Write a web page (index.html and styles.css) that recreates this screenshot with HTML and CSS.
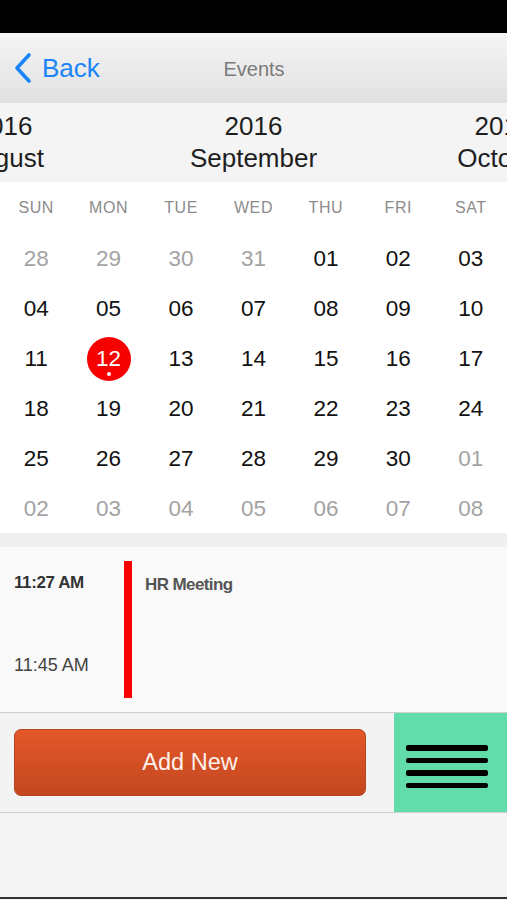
FILE: index.html
```html
<!DOCTYPE html>
<html lang="en">
<head>
  <meta charset="UTF-8" />
  <meta name="viewport" content="width=device-width, initial-scale=1" />
  <title>Events</title>
  <link rel="stylesheet" href="styles.css">
</head>
<body>
  <div class="status"></div>
  <header class="nav">
    <a class="back" href="#">
      <svg width="20" height="32" viewBox="0 0 20 32"><path d="M16 3 L4 16 L16 29" fill="none" stroke="#1a84f8" stroke-width="3.6" stroke-linecap="round" stroke-linejoin="round"/></svg>
      <span>Back</span>
    </a>
    <div class="title">Events</div>
    <div></div>
  </header>
  <div class="months">
    <div class="month">2016<br>August</div>
    <div class="month">2016<br>September</div>
    <div class="month">2016<br>October</div>
  </div>
  <div class="cal" id="cal">
    <div class="wd">SUN</div><div class="wd">MON</div><div class="wd">TUE</div><div class="wd">WED</div><div class="wd">THU</div><div class="wd">FRI</div><div class="wd">SAT</div>
  </div>
  <div class="gap"></div>
  <section class="events">
    <div class="times">
      <div class="start">11:27 AM</div>
      <div class="end">11:45 AM</div>
    </div>
    <div class="bar"></div>
    <div class="ev-title">HR Meeting</div>
  </section>
  <div class="actions">
    <div class="btn-wrap"><button class="add">Add New</button></div>
    <div class="menu">
      <span></span><span></span><span></span><span></span>
    </div>
  </div>
  <div class="filler"></div>
  <script>
    const cal = document.getElementById("cal");
    const days = [];
    [28, 29, 30, 31].forEach(d => days.push({ d, other: true }));
    for (let d = 1; d <= 30; d++) days.push({ d });
    for (let d = 1; d <= 8; d++) days.push({ d, other: true });
    days.forEach(({ d, other }) => {
      const cell = document.createElement("div");
      cell.className = "day" + (other ? " other" : "");
      const txt = String(d).padStart(2, "0");
      if (!other && d === 12) {
        cell.innerHTML = `<span class="today">${txt}<i></i></span>`;
      } else {
        cell.textContent = txt;
      }
      cal.appendChild(cell);
    });
  </script>
</body>
</html>
```

FILE: styles.css
```css
* { box-sizing: border-box; }
body { margin: 0; font-family: "Liberation Sans", Arial, sans-serif; background: #f4f4f4; }
.status { height: 33px; background: #000; }
.nav { height: 70px; display: grid; grid-template-columns: 1fr auto 1fr; align-items: center; background: linear-gradient(#f5f5f5, #e1e1e1); }
.back { display: flex; align-items: center; gap: 9px; padding-left: 13px; color: #1a84f8; text-decoration: none; font-size: 26px; }
.title { font-size: 20px; color: #7a7a7a; padding: 3px 0 0 1px; }
.months { height: 79px; display: flex; justify-content: center; overflow: hidden; background: #f4f4f4; padding-top: 7px; }
.month { flex: 0 0 250px; text-align: center; font-size: 26px; line-height: 32px; color: #1e1e1e; }
.cal { height: 351px; background: #fff; display: grid; grid-template-columns: repeat(7, 1fr); grid-template-rows: 52px repeat(6, 1fr); align-items: center; justify-items: center; }
.wd { font-size: 16px; letter-spacing: 0.6px; color: #8c8c8c; }
.day { font-size: 22.5px; color: #111; padding-top: 1px; }
.day.other { color: #a3a3a3; }
.today { position: relative; width: 44px; height: 44px; border-radius: 50%; background: #f60000; color: #fff; display: flex; align-items: center; justify-content: center; }
.today i { position: absolute; left: 20px; bottom: 5px; width: 4px; height: 4px; border-radius: 50%; background: #fff; }
.gap { height: 14px; background: #efefef; }
.events { height: 166px; display: flex; padding: 14px 0 0 14px; background: #f9f9f9; border-bottom: 1px solid #cfcfcf; }
.times { width: 110px; display: flex; flex-direction: column; }
.start { font-size: 17px; font-weight: bold; letter-spacing: -0.4px; color: #333; margin-top: 12px; }
.end { font-size: 18px; color: #444; margin-top: 62px; }
.bar { width: 8px; height: 137px; background: #f80000; }
.ev-title { margin: 14px 0 0 13px; font-size: 17px; font-weight: bold; letter-spacing: -0.6px; color: #555; }
.actions { height: 100px; display: flex; background: #f3f3f3; border-bottom: 1px solid #cfcfcf; }
.btn-wrap { flex: 1; padding: 16px 28px 0 14px; }
.add { width: 100%; height: 67px; border: 1px solid #b5441f; border-radius: 7px; background: linear-gradient(#e4572a, #c3481f); color: #fdf0ea; font-family: inherit; font-size: 23.5px; }
.menu { width: 113px; background: #62dcab; display: flex; flex-direction: column; gap: 7px; padding: 32px 0 0 12px; }
.menu span { width: 82px; height: 5.5px; background: #000; border-radius: 2px; }
.filler { height: 86px; border-bottom: 2px solid #333; }
```
